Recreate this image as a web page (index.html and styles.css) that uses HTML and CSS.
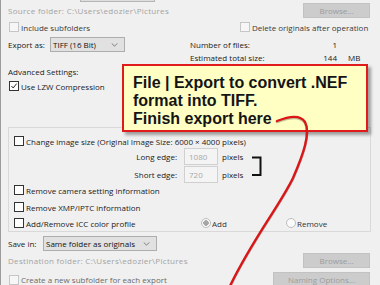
FILE: index.html
```html
<!DOCTYPE html>
<html>
<head>
<meta charset="utf-8">
<link rel="stylesheet" href="styles.css">
</head>
<body>
<div class="dialog">
  <div class="cutbar"></div>
  <div class="row r-source">
    <span class="dis">Source folder: C:\Users\edozier\Pictures</span>
    <span class="btn btn-browse">Browse...</span>
  </div>
  <div class="r-opts">
    <div class="chk"><span class="box box-dis"></span><span class="lbl-soft">Include subfolders</span></div>
    <div class="chk"><span class="box box-dis"></span><span class="lbl-soft">Delete originals after operation</span></div>
  </div>
  <div class="mid">
    <div class="mid-left">
      <div class="row r-export">
        <span class="lab-export">Export as:</span>
        <span class="select sel-export">TIFF (16 Bit)<svg class="chev" viewBox="0 0 8 5"><polyline points="0.5,0.5 4,4 7.5,0.5"/></svg></span>
      </div>
      <div class="row r-adv">Advanced Settings:</div>
      <div class="row r-lzw">
        <div class="chk"><span class="box box-on"><svg viewBox="0 0 10 10"><polyline points="1.8,5 4,7.5 8.3,2"/></svg></span><span>Use LZW Compression</span></div>
      </div>
    </div>
    <div class="mid-right">
      <div class="stat"><span>Number of files:</span><span class="num">1</span><span class="unit"></span></div>
      <div class="stat"><span>Estimated total size:</span><span class="num">144</span><span class="unit">MB</span></div>
    </div>
  </div>
  <div class="group">
    <div class="row g-change">
      <div class="chk"><span class="box"></span><span>Change image size (Original Image Size: 6000 × 4000 pixels)</span></div>
    </div>
    <div class="row g-size">
      <span class="size-lab">Long edge:</span>
      <span class="inp">1080</span>
      <span class="px">pixels</span>
    </div>
    <div class="row g-size g-short">
      <span class="size-lab">Short edge:</span>
      <span class="inp">720</span>
      <span class="px">pixels</span>
    </div>
    <div class="row g-line g-cam">
      <div class="chk"><span class="box"></span><span>Remove camera setting information</span></div>
    </div>
    <div class="row g-line g-xmp">
      <div class="chk"><span class="box"></span><span>Remove XMP/IPTC information</span></div>
    </div>
    <div class="g-icc">
      <div class="chk"><span class="box"></span><span>Add/Remove ICC color profile</span></div>
      <div class="radio"><span class="dot dot-on"></span><span>Add</span></div>
      <div class="radio"><span class="dot"></span><span>Remove</span></div>
    </div>
  </div>
  <div class="row r-save">
    <span class="lab-save">Save in:</span>
    <span class="select sel-save">Same folder as originals<svg class="chev" viewBox="0 0 8 5"><polyline points="0.5,0.5 4,4 7.5,0.5"/></svg></span>
  </div>
  <div class="row r-dest">
    <span class="dis">Destination folder: C:\Users\edozier\Pictures</span>
    <span class="btn btn-browse">Browse...</span>
  </div>
  <div class="row r-create">
    <div class="chk"><span class="box box-dis"></span><span class="lbl-grey">Create a new subfolder for each export</span></div>
    <span class="btn btn-naming">Naming Options...</span>
  </div>
</div>
<div class="callout">File | Export to convert .NEF<br>format into TIFF.<br>Finish export here</div>
<svg class="overlay" viewBox="0 0 380 285" width="380" height="285">
  <path class="bracket" d="M252 157.5 H260.5 V175 H252"/>
  <path class="curve-shadow" d="M277 122 C287 118 300 115 305 123 C311 134 303 156 293 179 C280 206 252 241 230 287"/>
  <path class="curve" d="M277 121 C287 117 300 114 305 122 C311 133 303 155 293 178 C280 205 252 240 230 286"/>
</svg>
</body>
</html>
```
FILE: styles.css
```css
* { box-sizing: border-box; }
html, body { margin: 0; padding: 0; }
body {
  width: 380px;
  height: 285px;
  overflow: hidden;
  position: relative;
  background: #f0f0f0;
  font-family: "Open Sans", "Noto Sans", sans-serif;
  font-size: 8px;
  color: #1a1a1a;
}
.dialog {
  width: 380px;
  height: 285px;
  border-left: 1px solid #9c9c9c;
  padding: 0 10px 0 7px;
}
.row { display: flex; align-items: center; white-space: nowrap; }
.dis { color: #a3a3a3; letter-spacing: 0.3px; }
.lbl-soft { color: #3a3a3a; }
.lbl-grey { color: #6a6a6a; }

.cutbar {
  margin-left: 72px;
  width: 75px;
  height: 2px;
  background: #dedede;
  border: 1px solid #b5b5b5;
  border-top: none;
}
.btn {
  display: flex;
  align-items: center;
  justify-content: center;
  height: 15px;
  background: #cccccc;
  border: 1px solid #c2c2c2;
  color: #9c9c9c;
}
.btn-browse { width: 67px; }
.btn-naming { width: 97px; }

.r-source { margin-top: 1px; height: 15px; justify-content: space-between; }

.chk { display: flex; align-items: center; white-space: nowrap; }
.box {
  width: 10px;
  height: 10px;
  margin-left: 1px;
  margin-right: 2px;
  border: 1px solid #333;
  background: #fff;
  flex: none;
  display: flex;
}
.box-dis { border-color: #c6c6c6; background: #f6f6f6; }
.box-on svg { width: 100%; height: 100%; }
.box-on polyline { fill: none; stroke: #222; stroke-width: 1.2; }

.r-opts {
  margin-top: 2px;
  height: 14px;
  display: grid;
  grid-template-columns: 231px auto;
  align-items: center;
}

.mid { display: grid; grid-template-columns: 182px auto; }
.r-export { margin-top: 3px; height: 15px; }
.lab-export { width: 42px; }
.select {
  display: flex;
  align-items: center;
  height: 15px;
  background: #e1e1e1;
  border: 1px solid #adadad;
  padding-left: 2px;
  position: relative;
  color: #111;
}
.sel-export { width: 75px; }
.sel-save { width: 114px; }
.chev {
  position: absolute;
  right: 6px;
  top: 5px;
  width: 7px;
  height: 4px;
}
.chev polyline { fill: none; stroke: #666; stroke-width: 1; }
.r-adv { margin-top: 12px; height: 14px; }
.r-lzw { margin-top: 1px; height: 14px; }

.mid-right { padding-top: 4px; }
.stat {
  display: grid;
  grid-template-columns: 120px 27px auto;
  height: 13px;
  align-items: center;
  white-space: nowrap;
}
.num { text-align: right; }
.unit { padding-left: 11px; }

.group {
  margin-top: 34px;
  width: 363px;
  border: 1px solid #d9d9d9;
  padding: 6px 0 1px 5px;
}
.group .box { margin-left: 0; }
.g-change { height: 14px; }
.g-size { height: 17px; }
.g-short { margin-top: 1px; }
.size-lab { width: 163px; text-align: right; }
.inp {
  margin-left: 7px;
  width: 34px;
  height: 17px;
  border: 1px solid #d0d0d0;
  background: #f4f4f4;
  color: #a8a8a8;
  display: flex;
  align-items: center;
  padding-left: 4px;
}
.px { margin-left: 4px; }
.g-line { height: 14px; }
.g-xmp { margin-top: 3px; }
.g-icc {
  margin-top: 2px;
  height: 14px;
  display: grid;
  grid-template-columns: 187px 85px auto;
  align-items: center;
}
.radio { display: flex; align-items: center; color: #333; }
.dot {
  width: 10px;
  height: 10px;
  border-radius: 50%;
  border: 1px solid #bdbdbd;
  background: #fafafa;
  margin-right: 1px;
}
.dot-on { background: radial-gradient(circle, #a6a6a6 0 2.5px, #fafafa 3px); }

.r-save { margin-top: 4px; height: 15px; }
.lab-save { width: 35px; }
.r-dest { margin-top: 2px; height: 15px; justify-content: space-between; }
.r-create { margin-top: 4px; height: 15px; justify-content: space-between; }

.callout {
  position: absolute;
  left: 122px;
  top: 64px;
  width: 246px;
  height: 68px;
  background: #ffffc4;
  border: 2px solid #e01b1b;
  box-shadow: 3px 3px 3px rgba(0, 0, 0, 0.35);
  padding: 8px 0 0 9px;
  font-family: "Liberation Sans", Arial, sans-serif;
  font-weight: bold;
  font-size: 16px;
  line-height: 18px;
  color: #141414;
  white-space: nowrap;
}
.overlay {
  position: absolute;
  left: 0;
  top: 0;
  pointer-events: none;
}
.bracket { fill: none; stroke: #111; stroke-width: 2; }
.curve { fill: none; stroke: #dc1616; stroke-width: 2.4; stroke-linecap: round; }
.curve-shadow { fill: none; stroke: rgba(0,0,0,0.25); stroke-width: 2.6; stroke-linecap: round; }
```
